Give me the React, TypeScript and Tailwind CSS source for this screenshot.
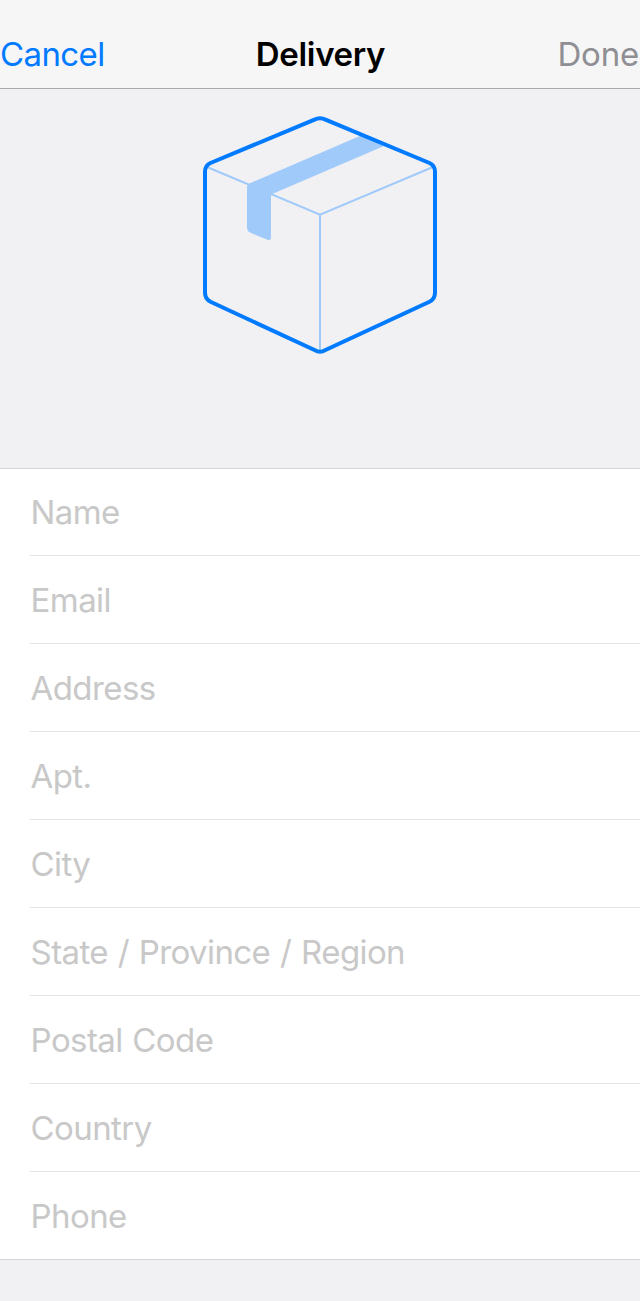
const fields = [
  "Name",
  "Email",
  "Address",
  "Apt.",
  "City",
  "State / Province / Region",
  "Postal Code",
  "Country",
  "Phone",
];

function PackageIcon() {
  return (
    <svg width="240" height="244" viewBox="200 113 240 244" fill="none">
      <path d="M207 167L320 214.700L433 167M320 214.700V351" stroke="#a0cafa" strokeWidth="2" />
      <path d="M361 135.500L384 146L271 194.500V237.500Q271 241 267.500 239.800L251 233Q247 231.500 247 227.500V187Q247 184.500 250 183.200Z" fill="#a0cafa" />
      <path d="M314.500 119.600Q320 116.800 325.500 119.600L429.500 163Q435 165.500 435 171.500V292.500Q435 299 429.500 301.700L325 350.300Q320 353.300 315 350.300L210.500 301.700Q205 299 205 292.500V171.500Q205 165.500 210.500 163Z" stroke="#007aff" strokeWidth="4" />
    </svg>
  );
}

export default function App() {
  return (
    <div className="flex h-[1301px] w-[640px] flex-col overflow-hidden bg-[#f1f1f4] font-['Inter',sans-serif] text-[33px]">
      <header className="grid h-[89px] grid-cols-3 items-center border-b border-[#a9a9ab] bg-[#f6f6f6] pt-[22px]">
        <button className="text-left tracking-[-0.6px] text-[#007aff]">Cancel</button>
        <h1 className="pl-px text-center font-semibold tracking-[-0.3px]">Delivery</h1>
        <button className="pr-px text-right tracking-[-0.2px] text-[#8e8e93]">Done</button>
      </header>
      <div className="flex h-[379px] justify-center pt-6">
        <PackageIcon />
      </div>
      <form className="flex flex-col border-y border-[#d6d6d8] bg-white pl-[30px]">
        {fields.map((label) => (
          <label key={label} className="flex h-[88px] items-center border-b border-[#e5e5e6] pt-[3px] pl-[0.6px] tracking-[-0.6px] text-[#c8c8c8] [word-spacing:1.1px] first:h-[87px] first:pt-px last:h-[87px] last:border-b-0">
            {label}
          </label>
        ))}
      </form>
    </div>
  );
}
